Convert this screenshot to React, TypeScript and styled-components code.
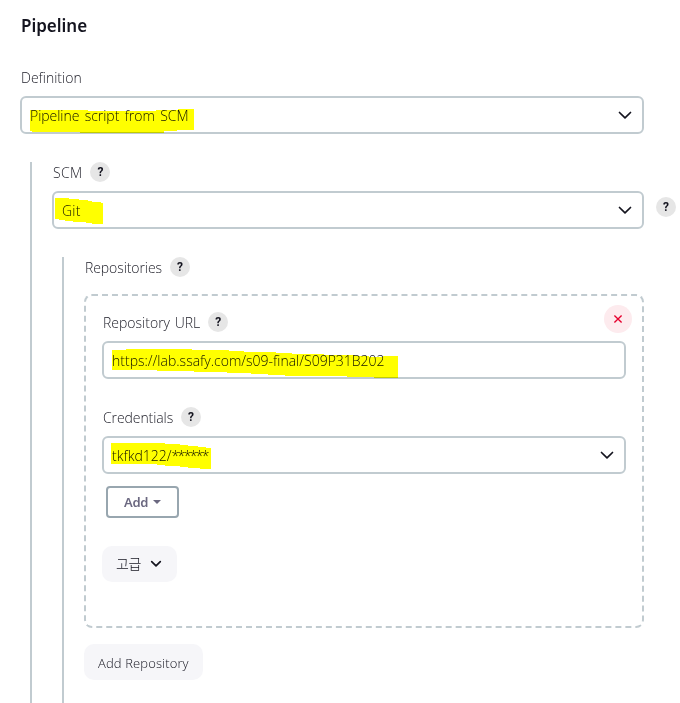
import React from "react";
import styled, { createGlobalStyle } from "styled-components";

const line = "#c1cbd0";
const ink = "#14141f";

const GlobalStyle = createGlobalStyle`
  *, *::before, *::after { box-sizing: border-box; }
  html, body { margin: 0; background: #fff; }
  body {
    height: 703px;
    overflow: hidden;
    font-family: "Open Sans", "Noto Sans CJK KR", sans-serif;
    font-size: 14px;
    font-weight: 300;
    color: ${ink};
  }
`;

const Page = styled.main`
  width: 680px;
  height: 703px;
  padding: 14px 0 0 20px;
  overflow: hidden;
`;

const Title = styled.h1`
  margin: 0 0 29px;
  padding-left: 1px;
  height: 24px;
  font: 600 17px/24px "Noto Sans", sans-serif;
  letter-spacing: -0.02px;
`;

const Text = styled.span<{ $track?: number; $word?: number }>`
  letter-spacing: ${(p) => p.$track ?? 0}px;
  word-spacing: ${(p) => p.$word ?? 0}px;
  white-space: pre;
`;

const Label = styled.div`
  display: flex;
  align-items: flex-start;
  gap: 8px;
  height: 29px;
  padding-left: 1px;
  line-height: 22px;
  color: #22222c;
`;

const HelpButton = styled.button`
  flex: none;
  width: 20px;
  height: 20px;
  padding: 0;
  border: 0;
  border-radius: 50%;
  background: #e6e6e6;
  color: ${ink};
  font: 700 12px/20px Roboto, sans-serif;
  text-align: center;
`;

const Control = styled.div<{ $width: number }>`
  position: relative;
  display: flex;
  align-items: center;
  justify-content: space-between;
  width: ${(p) => p.$width}px;
  height: 38px;
  padding: 0 10px 0 8px;
  border: 2px solid ${line};
  border-radius: 6px;
  line-height: 20px;
  & > ${Text} { padding-top: 2px; }
`;

const Marker = styled.svg`
  position: absolute;
  inset: -2px;
  pointer-events: none;
  mix-blend-mode: multiply;
`;

const Nested = styled.section`
  width: 650px;
  margin: 28px 0 0 10px;
  padding-left: 20px;
  border-left: 2px solid ${line};
`;

const ScmSection = styled(Nested)`
  height: 560px;
`;

const RepositoriesSection = styled(Nested)`
  height: 460px;
`;

const SelectRow = styled.div`
  display: flex;
  gap: 12px;
  & > ${HelpButton} { margin-top: 6px; }
`;

const RepositoryCard = styled.div`
  display: flex;
  flex-direction: column;
  align-items: flex-start;
  width: 560px;
  height: 334px;
  margin-top: 8px;
  padding: 16px 16px 0;
  border: 2px dashed ${line};
  border-radius: 8px;
`;

const CardHeader = styled.div`
  display: flex;
  justify-content: space-between;
  width: 524px;
  height: 29px;
`;

const RemoveButton = styled.button`
  width: 28px;
  height: 28px;
  margin: -7px -6px 0 0;
  padding: 0;
  display: grid;
  place-items: center;
  border: 0;
  border-radius: 50%;
  background: #fdebee;
`;

const Field = styled.div`
  margin-top: 28px;
`;

const AddButton = styled.button`
  display: flex;
  align-items: center;
  gap: 5px;
  width: 73px;
  height: 32px;
  margin: 12px 0 0 4px;
  padding: 0 0 0 16px;
  border: 2px solid #98a6af;
  border-radius: 4px;
  background: #fff;
  color: #6b6880;
  font: 600 13px/20px "Noto Sans", sans-serif;
  letter-spacing: -0.3px;
`;

const SoftButton = styled.button<{ $width: number; $top: number }>`
  display: flex;
  align-items: center;
  gap: 10px;
  width: ${(p) => p.$width}px;
  height: 36px;
  margin-top: ${(p) => p.$top}px;
  padding: 2px 0 0 14px;
  border: 0;
  border-radius: 10px;
  background: #f6f6f9;
  color: ${ink};
  font: 300 13px/20px "Open Sans", "Noto Sans CJK KR", sans-serif;
`;

const AdvancedButton = styled(SoftButton)`
  padding-top: 0;
  gap: 9px;
  font-size: 14px;
`;

const Chevron = ({ small = false }: { small?: boolean }) => (
  <svg width={small ? 12 : 14} height={small ? 8 : 9} viewBox={small ? "0 0 12 8" : "0 0 14 9"} fill="none">
    <path
      d={small ? "m1.7 1.6 4.3 4.2 4.3-4.2" : "M1.5 1.5 7 6.9l5.5-5.4"}
      stroke={ink}
      strokeWidth="1.7"
      strokeLinecap="round"
      strokeLinejoin="round"
    />
  </svg>
);

const Highlight = ({ points }: { points: string }) => (
  <Marker width="400" height="38" viewBox="0 0 400 38">
    <polygon points={points} fill="#ff0" shapeRendering="crispEdges" />
  </Marker>
);

const Help = () => <HelpButton aria-label="Help">?</HelpButton>;

export default function App() {
  return (
    <Page>
      <GlobalStyle />
      <Title>Pipeline</Title>
      <Label>
        <Text>Definition</Text>
      </Label>
      <Control $width={624}>
        <Text $track={-0.04} $word={1.8}>Pipeline script from SCM</Text>
        <Chevron />
        <Highlight points="10,14 68,14 68,15 136,15 136,14 158,14 158,13 174,13 174,34 157,34 157,35 144,35 144,37 60,37 60,36 12,36 12,35 10,35" />
      </Control>
      <ScmSection>
        <Label>
          <Text $track={0.33}>SCM</Text>
          <Help />
        </Label>
        <SelectRow>
          <Control $width={592}>
            <Text $track={0.2}>Git</Text>
            <Chevron />
            <Highlight points="3,7 17,7 17,8 27,8 27,9 36,9 36,10 40,10 40,11 47,11 51,12 51,33 40,33 40,32 27,31 15,30 10,29 3,28" />
          </Control>
          <Help />
        </SelectRow>
        <RepositoriesSection>
          <Label>
            <Text $track={-0.08}>Repositories</Text>
            <Help />
          </Label>
          <RepositoryCard>
            <CardHeader>
              <Label>
                <Text $word={1}>Repository URL</Text>
                <Help />
              </Label>
              <RemoveButton aria-label="Remove repository">
                <svg width="10" height="10" viewBox="0 0 10 10">
                  <path d="m1.4 1.4 7.2 7.2m0-7.2L1.4 8.6" stroke="#e6002e" strokeWidth="1.35" />
                </svg>
              </RemoveButton>
            </CardHeader>
            <Control $width={524}>
              <Text>https://lab.ssafy.com/s09-final/S09P31B202</Text>
              <Highlight points="10,9 24,9 24,8 90,8 90,9 127,9 127,10 157,11 190,12 190,13 253,14 253,15 281,16 281,15 296,15 296,37 272,37 272,36 245,36 245,35 183,35 183,34 149,33 149,32 101,31 82,30 55,30 55,29 10,29" />
            </Control>
            <Field>
              <Label>
                <Text $track={-0.09}>Credentials</Text>
                <Help />
              </Label>
              <Control $width={524}>
                <Text>
                  tkfkd122/<Text $track={-1.65}>******</Text>
                </Text>
                <Chevron />
                <Highlight points="9,7 63,7 63,8 78,8 78,9 94,10 98,11 109,12 109,33 98,33 98,32 86,32 86,31 70,30 55,29 55,28 9,28" />
              </Control>
            </Field>
            <AddButton>
              Add
              <svg width="8" height="4" viewBox="0 0 8 4"><path d="M0 0h8L4 4z" fill="#6b6880" /></svg>
            </AddButton>
            <AdvancedButton $width={75} $top={28}>
              <Text $track={-0.4}>고급</Text>
              <Chevron small />
            </AdvancedButton>
          </RepositoryCard>
          <SoftButton $width={119} $top={16}>
            <Text $track={0.13}>Add Repository</Text>
          </SoftButton>
        </RepositoriesSection>
      </ScmSection>
    </Page>
  );
}
